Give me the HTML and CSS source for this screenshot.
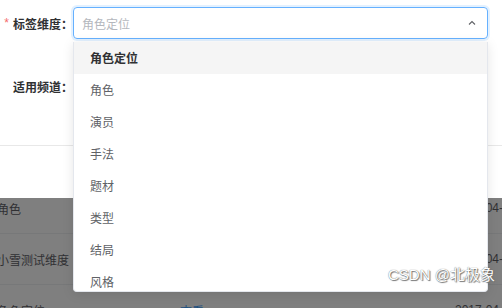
FILE: index.html
```html
<!DOCTYPE html>
<html>
<head>
    <title>标签维度</title>
    <link rel="stylesheet" href="styles.css">
</head>
<body>
    <div class="dialog">
        <form class="form">
            <div class="form-item">
                <label class="label"><span class="required">*</span>标签维度：</label>
                <div class="select is-focus">
                    <span class="placeholder">角色定位</span>
                    <svg class="arrow" width="10" height="10" viewBox="0 0 10 10"><path d="M2 6.5 L5 3.5 L8 6.5" fill="none" stroke="#606266" stroke-width="1.1"/></svg>
                </div>
            </div>
            <div class="form-item">
                <label class="label">适用频道：</label>
                <div class="select"></div>
            </div>
        </form>
    </div>

    <div class="table">
        <div class="row"><span class="cell name">角色</span><span class="cell op"></span><span class="cell date">2017-04-26 10:20</span></div>
        <div class="row"><span class="cell name">小雪测试维度</span><span class="cell op"></span><span class="cell date">2017-04-26 10:20</span></div>
        <div class="row"><span class="cell name">角色定位</span><span class="cell op link">查看</span><span class="cell date">2017-04-26 10:20</span></div>
    </div>

    <ul class="dropdown">
        <li class="option selected hover">角色定位</li>
        <li class="option">角色</li>
        <li class="option">演员</li>
        <li class="option">手法</li>
        <li class="option">题材</li>
        <li class="option">类型</li>
        <li class="option">结局</li>
        <li class="option">风格</li>
        <li class="option">时代</li>
    </ul>

    <div class="watermark">CSDN @北极象</div>
</body>
</html>
```

FILE: styles.css
```css
body {
    margin: 0;
    width: 502px;
    height: 308px;
    overflow: hidden;
    background-color: #7f7f7f;
    font-family: "Helvetica Neue", "Liberation Sans", "Noto Sans CJK SC", sans-serif;
    font-size: 12px;
    position: relative;
}
.dialog {
    position: relative;
    z-index: 1;
    background-color: #fff;
    height: 198px;
}
.form {
    margin: 0;
    padding: 7px 14px 0 3px;
    height: 138px;
    border-bottom: 1px solid #e8e8e8;
}
.form-item {
    display: flex;
    align-items: center;
    height: 32px;
    margin-bottom: 31px;
}
.label {
    width: 70px;
    flex-shrink: 0;
    display: flex;
    justify-content: flex-end;
    align-items: center;
    font-weight: bold;
    color: #303133;
}
.required {
    color: #f56c6c;
    margin-right: 4px;
    font-weight: normal;
}
.select {
    flex: 1;
    height: 32px;
    box-sizing: border-box;
    border: 1px solid #dcdfe6;
    border-radius: 4px;
    display: flex;
    align-items: center;
    justify-content: space-between;
    padding: 0 10px 0 8px;
}
.select.is-focus {
    border-color: #66b1ff;
    box-shadow: 0 0 0 2px rgba(64, 158, 255, 0.15);
}
.placeholder {
    color: #b4b7bd;
}
.arrow {
    display: block;
}

/* masked table under the dialog */
.table {
    margin-top: -15px;
}
.row {
    display: flex;
    align-items: center;
    height: 50px;
    border-bottom: 1px solid #777879;
    color: #303033;
}
.cell {
    white-space: nowrap;
    flex-shrink: 0;
}
.name {
    width: 183px;
    margin-left: -3px;
}
.op {
    width: 275px;
}
.link {
    color: #205080;
}

.dropdown {
    position: absolute;
    z-index: 2;
    top: 42px;
    left: 73px;
    width: 415px;
    height: 250px;
    box-sizing: border-box;
    margin: 0;
    padding: 0;
    list-style: none;
    overflow: hidden;
    background-color: #fff;
    border: 1px solid #e4e7ed;
    border-top: none;
    border-radius: 0 0 4px 4px;
    box-shadow: 0 2px 12px rgba(0, 0, 0, 0.1);
}
.option {
    height: 32px;
    box-sizing: border-box;
    padding: 3px 16px 0;
    line-height: 29px;
    color: #606266;
}
.option.hover {
    background-color: #f5f5f5;
}
.option.selected {
    font-weight: bold;
    color: #303133;
}
.watermark {
    position: absolute;
    z-index: 3;
    left: 388px;
    top: 263px;
    white-space: nowrap;
    font-size: 15px;
    color: #fff;
    text-shadow: 0 0 1px #555, 1px 1px 1px #777;
}
```
